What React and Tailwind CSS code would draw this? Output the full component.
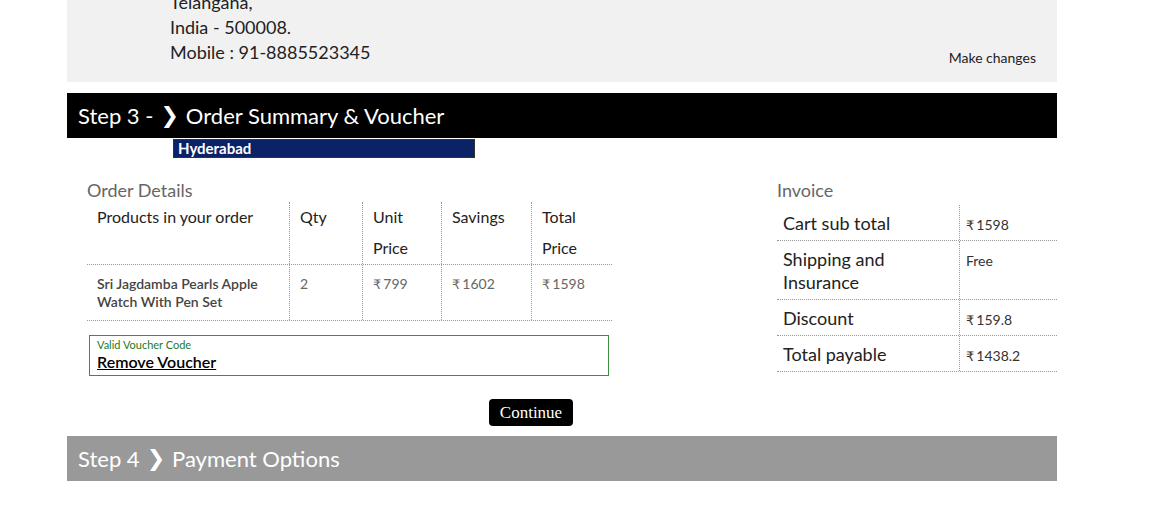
const font = { fontFamily: "Lato, 'DejaVu Sans', sans-serif" };
const glyph = { fontFamily: "'DejaVu Sans', sans-serif" };

function StepBar({ children, tone = "bg-black" }) {
  return (
    <div className={`flex h-[45px] items-center px-[11px] text-[22px] text-white ${tone}`}>
      {children}
    </div>
  );
}

function Chevron() {
  return (
    <span className="mx-[7px] text-[22px] font-bold" style={glyph}>
      ❯
    </span>
  );
}

const orderCols = [
  { label: ["Products in your order"], w: "w-[202px]" },
  { label: ["Qty"], w: "w-[73px]" },
  { label: ["Unit", "Price"], w: "w-[79px]" },
  { label: ["Savings"], w: "w-[90px]" },
  { label: ["Total", "Price"], w: "w-[81px]" },
];

function Rupee({ value }) {
  return (
    <span>
      <span style={glyph} className="mr-[2px] text-[13px]">₹</span>
      {value}
    </span>
  );
}

function OrderTable() {
  const row = [
    <span key="p" className="font-semibold text-[#444]">Sri Jagdamba Pearls Apple<br />Watch With Pen Set</span>,
    "2",
    <Rupee key="u" value="799" />,
    <Rupee key="s" value="1602" />,
    <Rupee key="t" value="1598" />,
  ];
  return (
    <div className="w-[525px]">
      <div className="flex border-b border-dotted border-[#999]">
        {orderCols.map((c, i) => (
          <div
            key={i}
            className={`${c.w} px-[10px] text-[16px] leading-[31px] text-[#222] ${i ? "border-l border-dotted border-[#999]" : ""}`}
          >
            {c.label.map((l) => (
              <div key={l} className="-mt-[1px] mb-[1px]">{l}</div>
            ))}
          </div>
        ))}
      </div>
      <div className="flex border-b border-dotted border-[#999]">
        {orderCols.map((c, i) => (
          <div
            key={i}
            className={`${c.w} px-[10px] pt-[10px] pb-[9px] text-[14px] leading-[18px] text-[#666] ${i ? "border-l border-dotted border-[#999]" : ""}`}
          >
            {row[i]}
          </div>
        ))}
      </div>
    </div>
  );
}

const invoice = [
  ["Cart sub total", <Rupee key="a" value="1598" />],
  [<>Shipping and<br />Insurance</>, "Free"],
  ["Discount", <Rupee key="b" value="159.8" />],
  ["Total payable", <Rupee key="c" value="1438.2" />],
];

export default function App() {
  return (
    <div className="w-[1149px] min-h-[505px] bg-white" style={font}>
      <div className="ml-[67px] w-[990px]">
        <div className="flex h-[82px] justify-between overflow-hidden bg-[#f1f1f1] pl-[103px] pr-[21px] text-[#222]">
          <div className="-mt-[10px] text-[18px] leading-[25px]">
            <div>Telangana,</div>
            <div>India - 500008.</div>
            <div>Mobile : 91-8885523345</div>
          </div>
          <div className="self-end mb-[14px] text-[14px] leading-[20px]">Make changes</div>
        </div>

        <div className="mt-[11px]">
          <StepBar>
            <span>Step 3 -</span>
            <Chevron />
            <span>Order Summary &amp; Voucher</span>
          </StepBar>
        </div>

        <div className="relative flex justify-between pl-[20px] pt-[40px] pb-[10px]">
          <div className="absolute left-[106px] top-[1px] h-[19px] w-[302px] border border-[#333] bg-[#0b2266] pl-[4px] text-[15px] font-bold leading-[17px] text-white">
            Hyderabad
          </div>

          <div>
            <div className="text-[18px] leading-[24px] text-[#666]">Order Details</div>
            <OrderTable />
            <div className="ml-[2px] mt-[14px] h-[41px] w-[520px] border border-[#3c8d3c] pl-[7px] pt-[2px]">
              <div className="text-[11px] leading-[14px] text-[#1e7a1e]">Valid Voucher Code</div>
              <div className="text-[16px] font-semibold leading-[20px] text-black underline">Remove Voucher</div>
            </div>
            <div className="ml-[402px] mt-[23px] flex h-[27px] w-[84px] items-center justify-center rounded-[4px] bg-black text-[17px] text-white" style={{ fontFamily: "'Liberation Serif', serif" }}>
              Continue
            </div>
          </div>

          <div className="w-[280px]">
            <div className="text-[18px] leading-[24px] text-[#666]">Invoice</div>
            <div className="mt-[3px]">
              {invoice.map(([label, value], i) => (
                <div key={i} className="flex border-b border-dotted border-[#999]">
                  <div className="w-[182px] pl-[6px] pt-[7px] pb-[5px] text-[18px] leading-[23px] text-[#222]">{label}</div>
                  <div className="flex-1 border-l border-dotted border-[#999] pl-[6px] pt-[10px] text-[14px] leading-[20px] text-[#333]">
                    {value}
                  </div>
                </div>
              ))}
            </div>
          </div>
        </div>

        <StepBar tone="bg-[#999999]">
          <span>Step 4</span>
          <Chevron />
          <span>Payment Options</span>
        </StepBar>
      </div>
    </div>
  );
}
